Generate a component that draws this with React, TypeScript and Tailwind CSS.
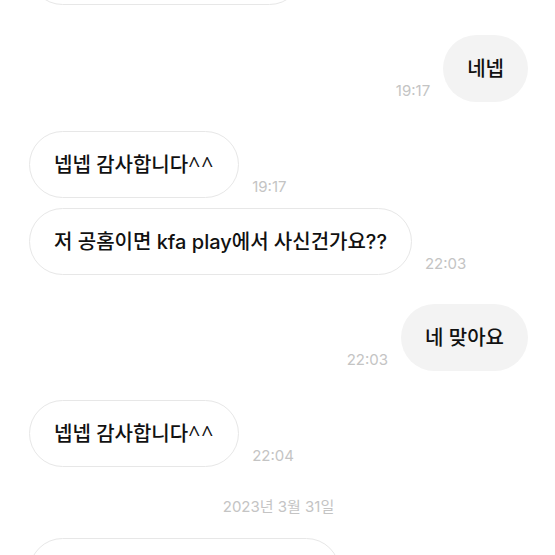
import React from "react";

const FONT = { fontFamily: '"Inter", "Noto Sans CJK KR", sans-serif' };

function Caret() {
  return (
    <span className="text-[21px] tracking-[1px]" style={{ fontFamily: '"Open Sans", sans-serif' }}>
      ^^
    </span>
  );
}

function Received({ children, time, className = "", w }: { children?: React.ReactNode; time: string; className?: string; w?: string }) {
  return (
    <div className={"flex items-end gap-[13px] " + className}>
      <div
        className={
          "h-[67px] shrink-0 flex items-center px-6 rounded-full border border-[#e7e7e7] bg-white text-[20px] leading-[24px] font-medium text-[#111111] whitespace-nowrap " +
          (w ?? "")
        }
      >
        {children}
      </div>
      {time && <span className="mb-[2px] text-[15px] leading-[18px] text-[#c4c4c4]">{time}</span>}
    </div>
  );
}

function Sent({ children, time, className = "" }: { children: React.ReactNode; time: string; className?: string }) {
  return (
    <div className={"flex items-end justify-end gap-[13px] " + className}>
      <span className="mb-[2px] text-[15px] leading-[18px] text-[#c4c4c4]">{time}</span>
      <div className="h-[67px] shrink-0 flex items-center px-6 rounded-full bg-[#f3f3f3] text-[20px] leading-[24px] font-medium text-[#111111] whitespace-nowrap">
        {children}
      </div>
    </div>
  );
}

export default function App() {
  return (
    <div className="w-[555px] h-[555px] overflow-hidden bg-white" style={FONT}>
      <div className="flex flex-col pl-[29px] pr-[27px] -mt-[62px]">
        <Received time="19:16" w="w-[274px]" />
        <Sent time="19:17" className="mt-[30px]">네넵</Sent>
        <Received time="19:17" className="mt-[29px]">
          넵넵 감사합니다<Caret />
        </Received>
        <Received time="22:03" className="mt-[10px]">
          저 공홈이면 kfa play에서 사신건가요??
        </Received>
        <Sent time="22:03" className="mt-[29px]">네 맞아요</Sent>
        <Received time="22:04" className="mt-[29px]">
          넵넵 감사합니다<Caret />
        </Received>
        <div className="mt-[30px] text-center text-[15px] leading-[20px] text-[#c4c4c4]">2023년 3월 31일</div>
        <Received time="" className="mt-[21px]" w="w-[311px]" />
      </div>
    </div>
  );
}
